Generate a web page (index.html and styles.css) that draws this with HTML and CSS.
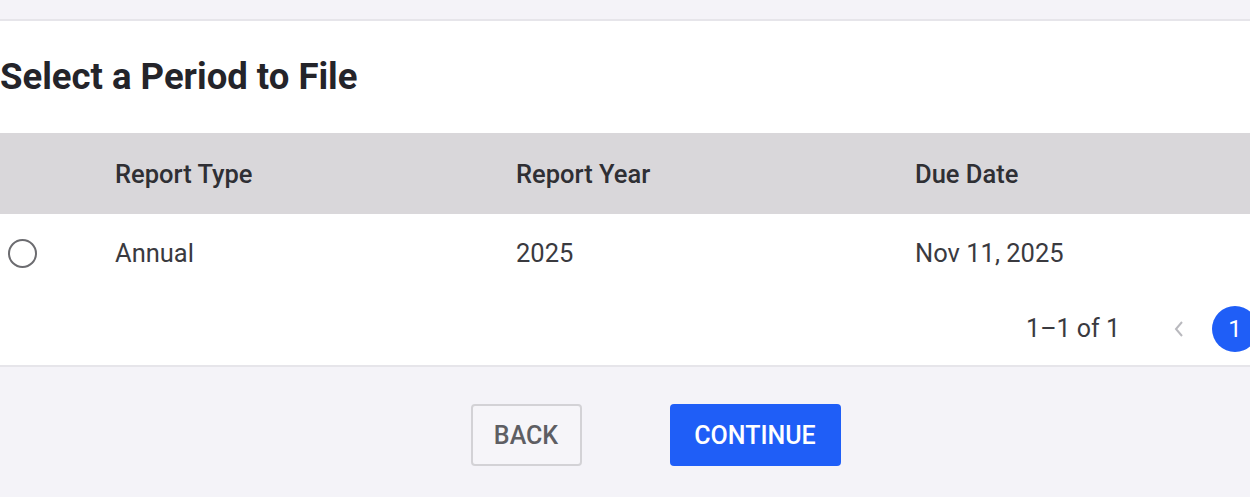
FILE: index.html
```html
<!DOCTYPE html>
<html lang="en">
<head>
    <meta charset="UTF-8">
    <meta name="viewport" content="width=device-width, initial-scale=1.0">
    <title>Select a Period to File</title>
    <link rel="stylesheet" href="styles.css">
</head>
<body>
    <div class="top-strip"></div>

    <div class="card">
        <h2 class="card-title">Select a Period to File</h2>

        <div class="table">
            <div class="table-row table-head">
                <div class="cell cell-select"></div>
                <div class="cell">Report Type</div>
                <div class="cell">Report Year</div>
                <div class="cell">Due Date</div>
            </div>
            <div class="table-row">
                <div class="cell cell-select"><span class="radio"></span></div>
                <div class="cell">Annual</div>
                <div class="cell">2025</div>
                <div class="cell">Nov 11, 2025</div>
            </div>
        </div>

        <div class="pagination">
            <span class="page-count">1–1 of 1</span>
            <span class="page-prev">
                <svg width="14" height="22" viewBox="0 0 14 22"><path d="M10 4 L4 11 L10 18" fill="none" stroke="#b9b9be" stroke-width="2"/></svg>
            </span>
            <span class="page-num">1</span>
        </div>
    </div>

    <div class="actions">
        <button type="button" class="btn btn-back">BACK</button>
        <button type="button" class="btn btn-continue">CONTINUE</button>
    </div>
</body>
</html>
```

FILE: styles.css
```css
body {
    margin: 0;
    font-family: Roboto, "Liberation Sans", sans-serif;
    background-color: #f4f3f8;
    color: #2b2b30;
    overflow: hidden;
}
.top-strip {
    height: 19px;
    border-bottom: 2px solid #e6e5ea;
}
.card {
    background-color: #fff;
    border-bottom: 2px solid #e6e5ea;
    height: 344px;
}
.card-title {
    margin: 0;
    padding: 34px 0 0 0;
    height: 112px;
    box-sizing: border-box;
    font-size: 36.5px;
    line-height: 44px;
    font-weight: 700;
    color: #24242a;
}
.table-row {
    display: grid;
    grid-template-columns: 115px 401px 399px 1fr;
    align-items: center;
    height: 78px;
    font-size: 25.5px;
    color: #3a3a3f;
}
.table-head {
    height: 81px;
    background-color: #d9d7da;
    font-weight: 500;
    color: #2f2f34;
}
.cell-select {
    display: flex;
    align-items: center;
    padding-left: 8px;
}
.radio {
    width: 25px;
    height: 25px;
    border: 2px solid #6c6c70;
    border-radius: 50%;
}
.pagination {
    display: flex;
    justify-content: flex-end;
    align-items: center;
    height: 73px;
    font-size: 25px;
    color: #3a3a3f;
    margin-right: -8px;
}
.page-count {
    margin-right: 52px;
}
.page-prev {
    display: flex;
    margin-right: 26px;
}
.page-num {
    width: 46px;
    height: 46px;
    border-radius: 50%;
    background-color: #1f5ef7;
    color: #fff;
    display: flex;
    align-items: center;
    justify-content: center;
    font-size: 24px;
}
.actions {
    display: flex;
    justify-content: center;
    gap: 88px;
    padding-top: 37px;
    padding-left: 61px;
}
.btn {
    height: 62px;
    border-radius: 4px;
    font-family: Roboto, "Liberation Sans", sans-serif;
    font-size: 25px;
    font-weight: 500;
    cursor: pointer;
}
.btn-back {
    width: 111px;
    background-color: #f6f5f9;
    border: 2px solid #d3d2d6;
    color: #5e5e63;
}
.btn-continue {
    width: 171px;
    background-color: #1f5ef7;
    border: none;
    color: #fff;
}
```
